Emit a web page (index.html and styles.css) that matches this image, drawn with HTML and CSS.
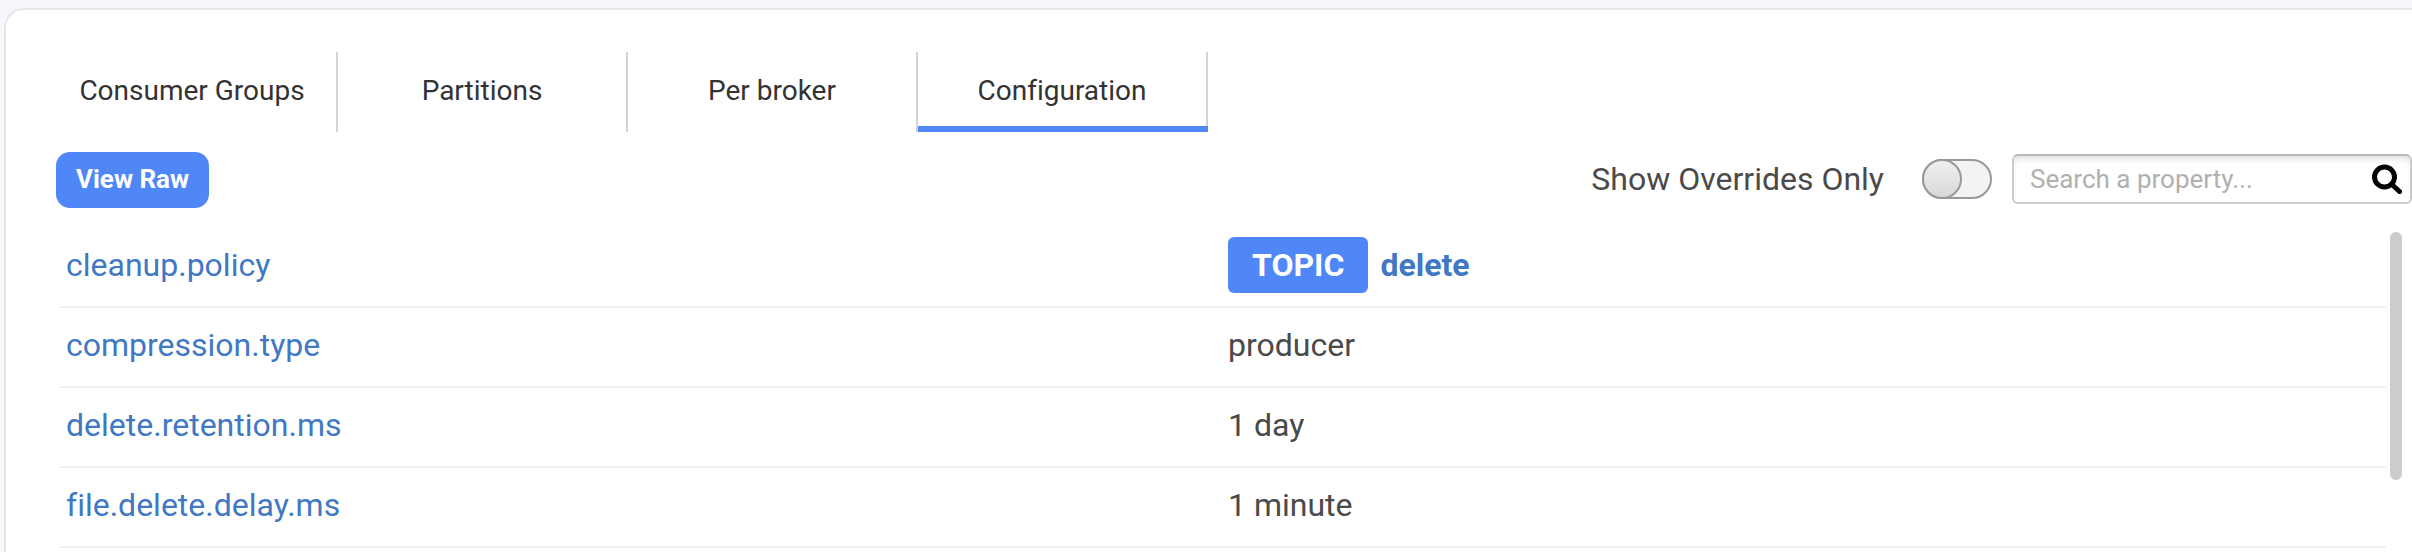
FILE: index.html
```html
<!DOCTYPE html>
<html lang="en">
<head>
    <meta charset="utf-8">
    <title>Topic Configuration</title>
    <link rel="stylesheet" href="styles.css">
</head>
<body>
    <main class="card">
        <nav class="tabs" role="tablist">
            <button class="tab" role="tab">Consumer Groups</button>
            <button class="tab" role="tab">Partitions</button>
            <button class="tab" role="tab">Per broker</button>
            <button class="tab active" role="tab" aria-selected="true">Configuration</button>
        </nav>

        <div class="toolbar">
            <button class="btn">View Raw</button>
            <div class="filters">
                <label class="toggle-label" for="overrides">Show Overrides Only</label>
                <input class="toggle" type="checkbox" id="overrides">
                <div class="search">
                    <input class="search-input" type="text" placeholder="Search a property..." aria-label="Search a property">
                    <svg class="search-icon" viewBox="0 0 30 30" fill="none" stroke="#000" stroke-linecap="round">
                        <circle cx="12.5" cy="13" r="10" stroke-width="5"/>
                        <path d="M21 21.5l6.5 6" stroke-width="5"/>
                    </svg>
                </div>
            </div>
        </div>

        <div class="config">
            <table class="config-table">
                <tr>
                    <td><a class="property" href="#">cleanup.policy</a></td>
                    <td><span class="badge">TOPIC</span><a class="property override" href="#">delete</a></td>
                </tr>
                <tr>
                    <td><a class="property" href="#">compression.type</a></td>
                    <td>producer</td>
                </tr>
                <tr>
                    <td><a class="property" href="#">delete.retention.ms</a></td>
                    <td>1 day</td>
                </tr>
                <tr>
                    <td><a class="property" href="#">file.delete.delay.ms</a></td>
                    <td>1 minute</td>
                </tr>
            </table>
            <div class="scrollbar"></div>
        </div>
    </main>
</body>
</html>
```

FILE: styles.css
```css
*, *::before, *::after {
    box-sizing: border-box;
}
body {
    margin: 0;
    padding: 8px 0 0 4px;
    background: #f6f7fc;
    color: #4a4a4a;
    font-family: Roboto, sans-serif;
    font-size: 32px;
    font-variant-ligatures: none;
}
button, input {
    font-family: inherit;
    font-variant-ligatures: inherit;
}
.card {
    min-height: calc(100vh - 8px);
    padding: 42px 0 0 42px;
    background: white;
    border: 2px solid #e6e6e6;
    border-right: none;
    border-bottom: none;
    border-top-left-radius: 20px;
}

/* tabs */
.tabs {
    display: flex;
}
.tab {
    position: relative;
    width: 290px;
    height: 80px;
    padding: 0 0 4px;
    background: none;
    border: none;
    border-right: 2px solid #d3d3d3;
    color: #333;
    font-size: 28px;
    cursor: pointer;
}
.tab.active::after {
    content: "";
    position: absolute;
    left: 0;
    right: -2px;
    bottom: 0;
    height: 6px;
    background: #5087f8;
}

/* toolbar */
.toolbar {
    display: flex;
    justify-content: space-between;
    align-items: center;
    margin-top: 20px;
    padding-left: 8px;
}
.btn {
    height: 56px;
    padding: 0 20px 2px;
    background: #5087f8;
    color: white;
    border: none;
    border-radius: 14px;
    font-size: 26px;
    font-weight: bold;
    cursor: pointer;
}
.filters {
    display: flex;
    align-items: center;
    padding-bottom: 2px;
}
.toggle-label {
    margin-right: 38px;
}
.toggle {
    appearance: none;
    width: 70px;
    height: 40px;
    margin: 0 20px 0 0;
    background: #f3f3f3;
    border: 2px solid #999;
    border-radius: 20px;
    cursor: pointer;
}
.toggle::before {
    content: "";
    display: block;
    width: 40px;
    height: 40px;
    margin: -2px;
    background: linear-gradient(#f0f0f0, #d8d8d8);
    border: 2px solid #999;
    border-radius: 50%;
}
.toggle:checked {
    background: #5087f8;
}
.toggle:checked::before {
    margin-left: 28px;
}
.search {
    position: relative;
    width: 400px;
}
.search-input {
    display: block;
    width: 100%;
    height: 50px;
    padding: 0 48px 0 16px;
    background: white;
    border: 2px solid #ccc;
    border-top-color: #b8b8b8;
    border-radius: 6px;
    box-shadow: inset 0 6px 6px -3px #e0e0e0;
    font-size: 26px;
}
.search-input::placeholder {
    color: #b0b0b0;
}
.search-icon {
    position: absolute;
    top: 10px;
    right: 10px;
    width: 30px;
    height: 30px;
}

/* config list */
.config {
    display: flex;
    align-items: flex-start;
    gap: 4px;
    margin-top: 20px;
    padding: 0 10px;
}
.config-table {
    flex: 1;
    table-layout: fixed;
    border-spacing: 0;
}
.config-table td {
    width: 50%;
    height: 80px;
    padding: 0 6px 4px;
    border-bottom: 2px solid #f2f2f2;
}
.config-table td:first-child {
    padding-left: 8px;
}
.property {
    color: #4178c4;
    text-decoration: none;
}
.override {
    font-weight: bold;
}
.badge {
    display: inline-block;
    margin-right: 12px;
    padding: 0 24px;
    background: #5087f8;
    color: white;
    border-radius: 6px;
    font-weight: bold;
    line-height: 56px;
}
.scrollbar {
    width: 12px;
    height: 248px;
    margin-top: 4px;
    background: #ccc;
    border-radius: 6px;
}
```
